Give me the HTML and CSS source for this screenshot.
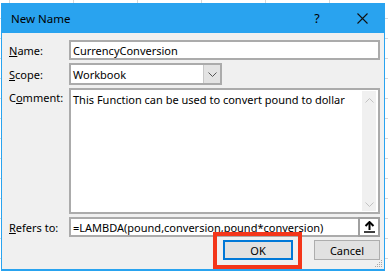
FILE: index.html
```html
<!DOCTYPE html>
<html lang="en">
<head>
    <meta charset="UTF-8">
    <meta name="viewport" content="width=device-width, initial-scale=1.0">
    <title>New Name</title>
    <link rel="stylesheet" href="styles.css">
</head>
<body>

    <div class="dialog">
        <!-- Title bar -->
        <div class="titlebar">
            <span class="title">New Name</span>
            <span class="help">?</span>
            <span class="close">
                <svg width="11" height="11" viewBox="0 0 11 11">
                    <path d="M0.5 0.5 L10.5 10.5 M10.5 0.5 L0.5 10.5" stroke="#111" stroke-width="1.1" fill="none"/>
                </svg>
            </span>
        </div>

        <div class="content">
            <div class="form">
                <label class="label"><u>N</u>ame:</label>
                <div class="field textbox">CurrencyConversion</div>

                <label class="label"><u>S</u>cope:</label>
                <div class="field combo">
                    <span class="combo-value">Workbook</span>
                    <span class="combo-btn">
                        <svg width="9" height="5" viewBox="0 0 9 5">
                            <path d="M0.5 0.5 L4.5 4.5 L8.5 0.5" stroke="#555" stroke-width="1" fill="none"/>
                        </svg>
                    </span>
                </div>

                <label class="label label-top">C<u>o</u>mment:</label>
                <div class="field memo">
                    <div class="memo-text">This Function can be used to convert pound to dollar</div>
                    <div class="scrollbar">
                        <svg width="9" height="5" viewBox="0 0 9 5">
                            <path d="M0.5 4.5 L4.5 0.5 L8.5 4.5" stroke="#c2c2c2" stroke-width="1" fill="none"/>
                        </svg>
                        <svg width="9" height="5" viewBox="0 0 9 5">
                            <path d="M0.5 0.5 L4.5 4.5 L8.5 0.5" stroke="#c2c2c2" stroke-width="1" fill="none"/>
                        </svg>
                    </div>
                </div>

                <label class="label"><u>R</u>efers to:</label>
                <div class="refers">
                    <div class="field textbox refers-box">=LAMBDA(pound,conversion,pound*conversion)</div>
                    <span class="collapse-btn">
                        <svg width="11" height="12" viewBox="0 0 11 12">
                            <path d="M5.5 1 L5.5 9" stroke="#000" stroke-width="2" fill="none"/>
                            <path d="M1.5 5 L5.5 1 L9.5 5" stroke="#000" stroke-width="2" fill="none"/>
                            <path d="M0 11 L11 11" stroke="#000" stroke-width="1.5"/>
                        </svg>
                    </span>
                </div>
            </div>

            <div class="actions">
                <button class="btn btn-default">OK</button>
                <button class="btn">Cancel</button>
            </div>
        </div>

        <!-- red annotation round the OK button -->
        <div class="highlight"></div>

        <svg class="grip" width="8" height="8" viewBox="0 0 8 8">
            <rect x="6" y="0" width="1" height="1" fill="#a8a8a8"/>
            <rect x="4" y="2" width="1" height="1" fill="#a8a8a8"/>
            <rect x="6" y="2" width="1" height="1" fill="#a8a8a8"/>
            <rect x="2" y="4" width="1" height="1" fill="#a8a8a8"/>
            <rect x="4" y="4" width="1" height="1" fill="#a8a8a8"/>
            <rect x="6" y="4" width="1" height="1" fill="#a8a8a8"/>
            <rect x="0" y="6" width="1" height="1" fill="#a8a8a8"/>
            <rect x="2" y="6" width="1" height="1" fill="#a8a8a8"/>
            <rect x="4" y="6" width="1" height="1" fill="#a8a8a8"/>
            <rect x="6" y="6" width="1" height="1" fill="#a8a8a8"/>
        </svg>
    </div>

</body>
</html>
```

FILE: styles.css
```css
body {
    margin: 0;
    background-color: #fff;
    background-image: linear-gradient(to right, #d8d8d8 1px, transparent 1px),
                      linear-gradient(to bottom, #d8d8d8 1px, transparent 1px);
    background-size: 64px 20px;
    background-position: 9px 18px;
    font-family: "Noto Sans", sans-serif;
    font-size: 11px;
    color: #000;
}

.dialog {
    position: relative;
    width: 384px;
    height: 268px;
    margin: 3px 0 0 1px;
    box-sizing: border-box;
    border: 1px solid #29a3ef;
    border-top: 0;
    border-bottom-width: 2px;
    background-color: #f0f0f0;
    display: flex;
    flex-direction: column;
}

.titlebar {
    height: 30px;
    background-color: #29a3ef;
    display: flex;
    align-items: center;
    padding-left: 9px;
}

.title {
    flex: 1;
    font-size: 11.5px;
    color: #000;
}

.help {
    width: 20px;
    text-align: center;
    font-size: 12.5px;
    margin-right: 30px;
}

.close {
    display: flex;
    width: 11px;
    margin-right: 16px;
}

.content {
    padding: 7px 3px 0 7px;
}

.form {
    display: grid;
    grid-template-columns: 60px 311px;
    grid-template-rows: 20px 22px 126px 20px;
    row-gap: 3px;
}

.label {
    display: flex;
    align-items: center;
}

.label-top {
    align-items: flex-start;
    padding-top: 2px;
}

.field {
    box-sizing: border-box;
    background-color: #fff;
    border: 2px solid #ababab;
}

.textbox {
    display: flex;
    align-items: center;
    padding-left: 2px;
    white-space: nowrap;
    overflow: hidden;
}

.combo {
    width: 153px;
    display: flex;
}

.combo-value {
    flex: 1;
    display: flex;
    align-items: center;
    padding-left: 2px;
}

.combo-btn {
    width: 16px;
    background-color: #e3e3e3;
    border-left: 1px solid #c8c8c8;
    display: flex;
    align-items: center;
    justify-content: center;
}

.memo {
    display: flex;
}

.memo-text {
    flex: 1;
    padding: 2px 2px;
}

.scrollbar {
    width: 14px;
    margin: 1px 2px 1px 0;
    background-color: #f0f0f0;
    display: flex;
    flex-direction: column;
    justify-content: space-between;
    align-items: center;
    padding: 7px 0 4px;
}

.refers {
    display: flex;
}

.refers-box {
    flex: 1;
    border-right: 0;
}

.collapse-btn {
    width: 22px;
    box-sizing: border-box;
    border: 2px solid #a0a0a0;
    background-color: #fff;
    display: flex;
    align-items: center;
    justify-content: center;
}

.actions {
    display: flex;
    justify-content: flex-end;
    gap: 21px;
    margin-top: 3px;
    margin-right: 1px;
}

.btn {
    height: 20px;
    width: 66px;
    box-sizing: border-box;
    background-color: #e1e1e1;
    border: 1px solid #adadad;
    font-family: inherit;
    font-size: 11px;
    padding: 0;
}

.btn-default {
    width: 70px;
    border: 2px solid #0078d7;
}

.highlight {
    position: absolute;
    left: 211px;
    top: 229px;
    width: 89px;
    height: 37px;
    box-sizing: border-box;
    border: 4px solid #f4361a;
}

.grip {
    position: absolute;
    right: 1px;
    bottom: 1px;
}
```
